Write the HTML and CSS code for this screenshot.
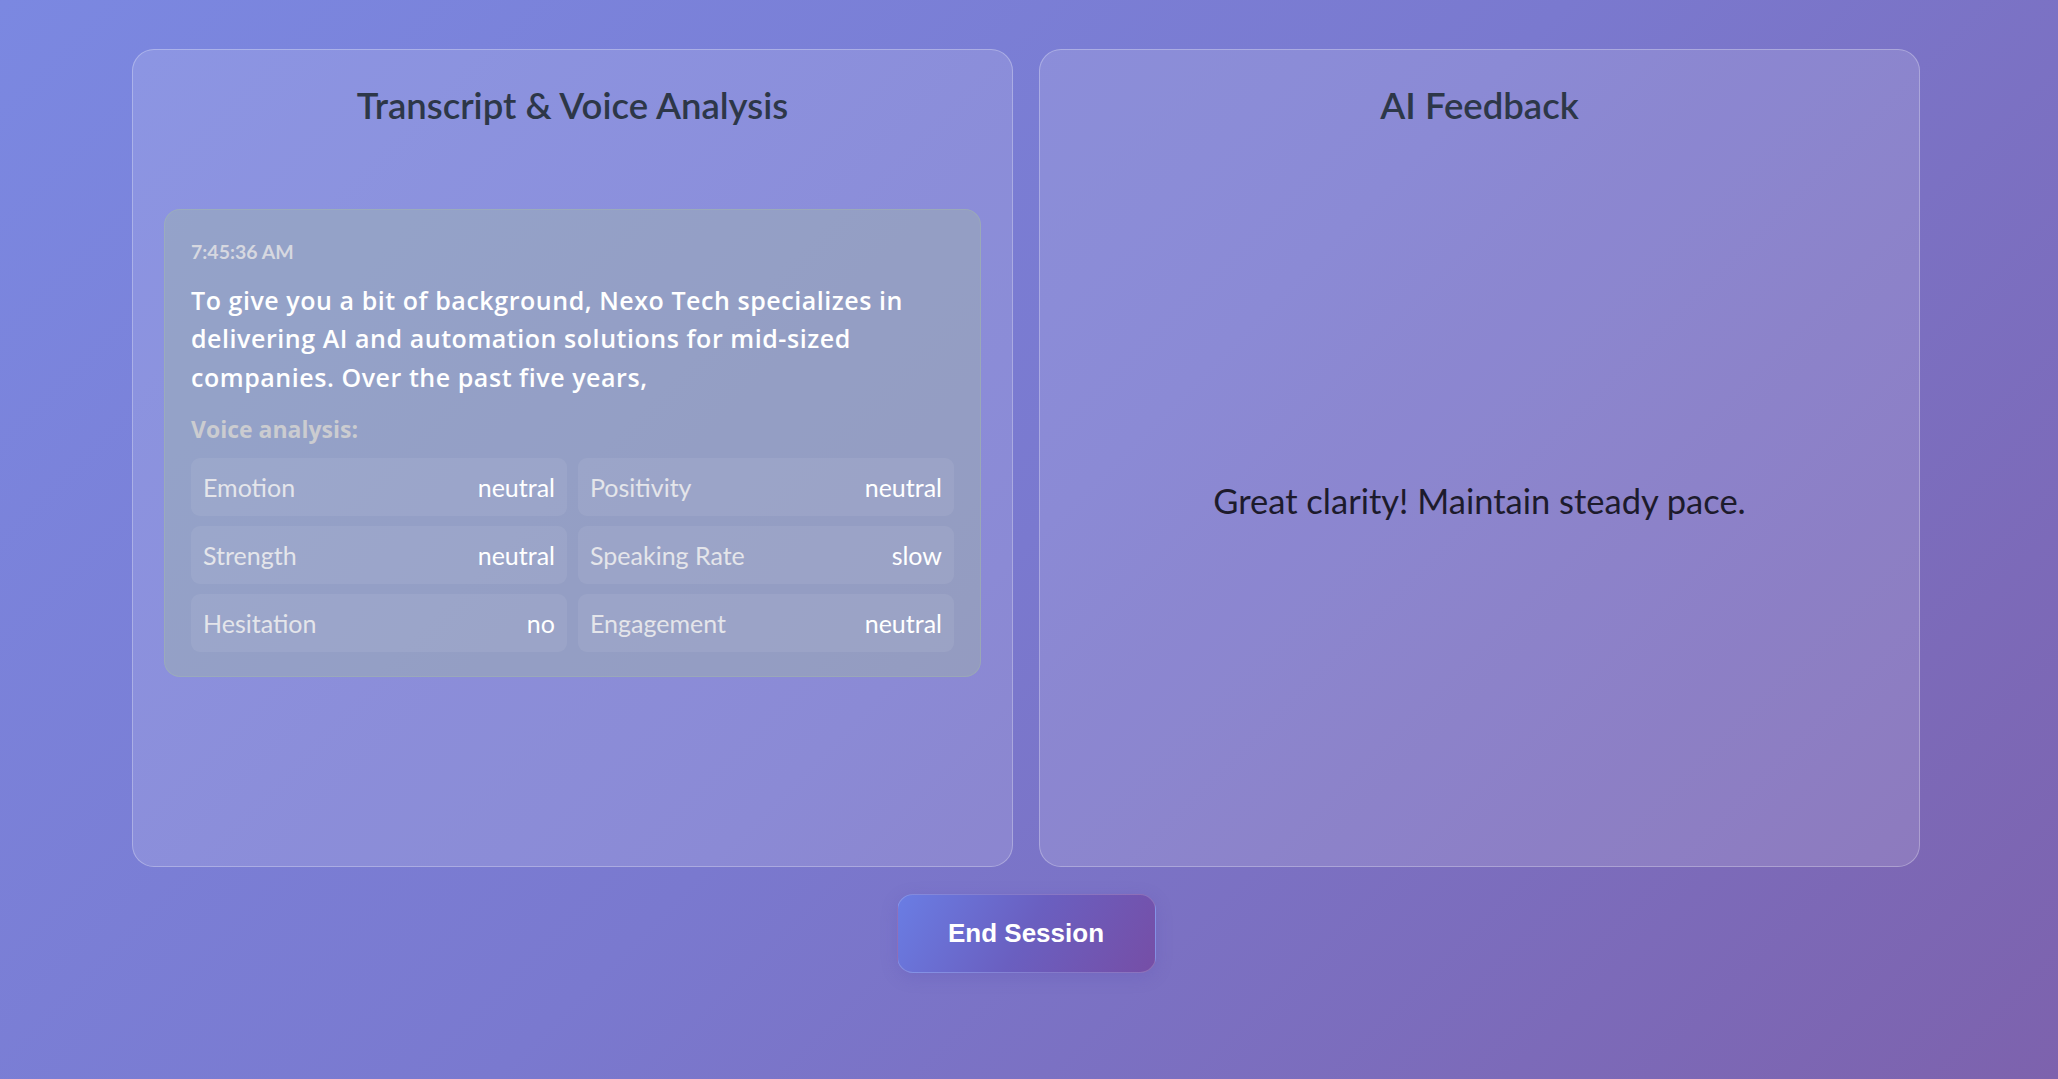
FILE: index.html
```html
<!DOCTYPE html>
<html lang="en">
<head>
<meta charset="utf-8">
<title>Session</title>
<link rel="stylesheet" href="styles.css">
</head>
<body>
<div class="app">
  <div class="panels">
    <section class="panel">
      <h2 class="panel-title">Transcript &amp; Voice Analysis</h2>
      <div class="transcript-list">
        <article class="entry">
          <div class="timestamp">7:45:36 AM</div>
          <p class="entry-text">To give you a bit of background, Nexo Tech specializes in delivering AI and automation solutions for mid-sized companies. Over the past five years,</p>
          <div class="analysis-label">Voice analysis:</div>
          <div class="stats">
            <div class="stat"><span class="stat-label">Emotion</span><span class="stat-value">neutral</span></div>
            <div class="stat"><span class="stat-label">Positivity</span><span class="stat-value">neutral</span></div>
            <div class="stat"><span class="stat-label">Strength</span><span class="stat-value">neutral</span></div>
            <div class="stat"><span class="stat-label">Speaking Rate</span><span class="stat-value">slow</span></div>
            <div class="stat"><span class="stat-label">Hesitation</span><span class="stat-value">no</span></div>
            <div class="stat"><span class="stat-label">Engagement</span><span class="stat-value">neutral</span></div>
          </div>
        </article>
      </div>
    </section>
    <section class="panel panel-feedback">
      <h2 class="panel-title">AI Feedback</h2>
      <div class="feedback">
        <p class="feedback-text">Great clarity! Maintain steady pace.</p>
      </div>
    </section>
  </div>
  <div class="actions">
    <button class="end-btn" type="button">End Session</button>
  </div>
</div>
</body>
</html>
```

FILE: styles.css
```css
* { box-sizing: border-box; }

html, body { height: 100%; }

body {
  margin: 0;
  padding: 49px 6px 0 0;
  min-height: 1079px;
  background: linear-gradient(135deg, #7b88e1 0%, #7a79cf 50%, #7d62ad 100%);
  font-family: Lato, "Open Sans", sans-serif;
  overflow: hidden;
}

.app {
  width: 1788px;
  margin: 0 auto;
}

.panels {
  display: grid;
  grid-template-columns: 1fr 1fr;
  gap: 26px;
  height: 818px;
}

.panel {
  display: flex;
  flex-direction: column;
  border: 1px solid rgba(255, 255, 255, 0.28);
  border-radius: 22px;
  background: rgba(255, 255, 255, 0.13);
  padding: 32px 31px;
}

.panel-title {
  margin: 2px 0 40px;
  font-size: 36.5px;
  line-height: 43px;
  font-weight: 600;
  color: #2d3748;
  text-align: center;
}

.transcript-list {
  padding-top: 42px;
}

.entry {
  border: 1px solid rgba(170, 200, 150, 0.25);
  border-radius: 16px;
  background: rgba(170, 200, 150, 0.3);
  padding: 28px 26px 24px;
}

.timestamp {
  font-size: 19.5px;
  line-height: 28px;
  font-weight: 700;
  color: #d6d8e0;
}

.entry-text {
  margin: 15px 0 0;
  font-family: "Open Sans", Lato, sans-serif;
  font-size: 25px;
  line-height: 38.4px;
  font-weight: 600;
  letter-spacing: 0.55px;
  color: #ffffff;
}

.analysis-label {
  margin-top: 18px;
  font-family: "Open Sans", Lato, sans-serif;
  font-size: 23px;
  line-height: 31px;
  font-weight: 700;
  color: #cbccd0;
}

.stats {
  margin-top: 13px;
  display: grid;
  grid-template-columns: 1fr 1fr;
  gap: 10px 11px;
}

.stat {
  height: 58px;
  display: flex;
  align-items: center;
  justify-content: space-between;
  padding: 0 12px;
  border-radius: 9px;
  background: rgba(255, 255, 255, 0.07);
  font-size: 25px;
}

.stat-label { color: #e4e5ea; }
.stat-value { color: #ffffff; }

.feedback {
  flex: 1;
  display: flex;
  align-items: center;
  justify-content: center;
}

.feedback-text {
  margin: 0;
  font-size: 34.5px;
  line-height: 1.2;
  color: #1d1b2c;
}

.actions {
  display: flex;
  justify-content: center;
  padding-top: 27px;
}

.end-btn {
  width: 259px;
  height: 79px;
  border: 1px solid rgba(255, 255, 255, 0.18);
  border-radius: 16px;
  background: linear-gradient(120deg, #6a7de4 0%, #6a5fc0 50%, #764ea6 100%);
  box-shadow: 0 4px 16px rgba(90, 80, 180, 0.25);
  color: #ffffff;
  font-family: "Liberation Sans", Arial, sans-serif;
  font-size: 26px;
  font-weight: 700;
  cursor: pointer;
}
```
